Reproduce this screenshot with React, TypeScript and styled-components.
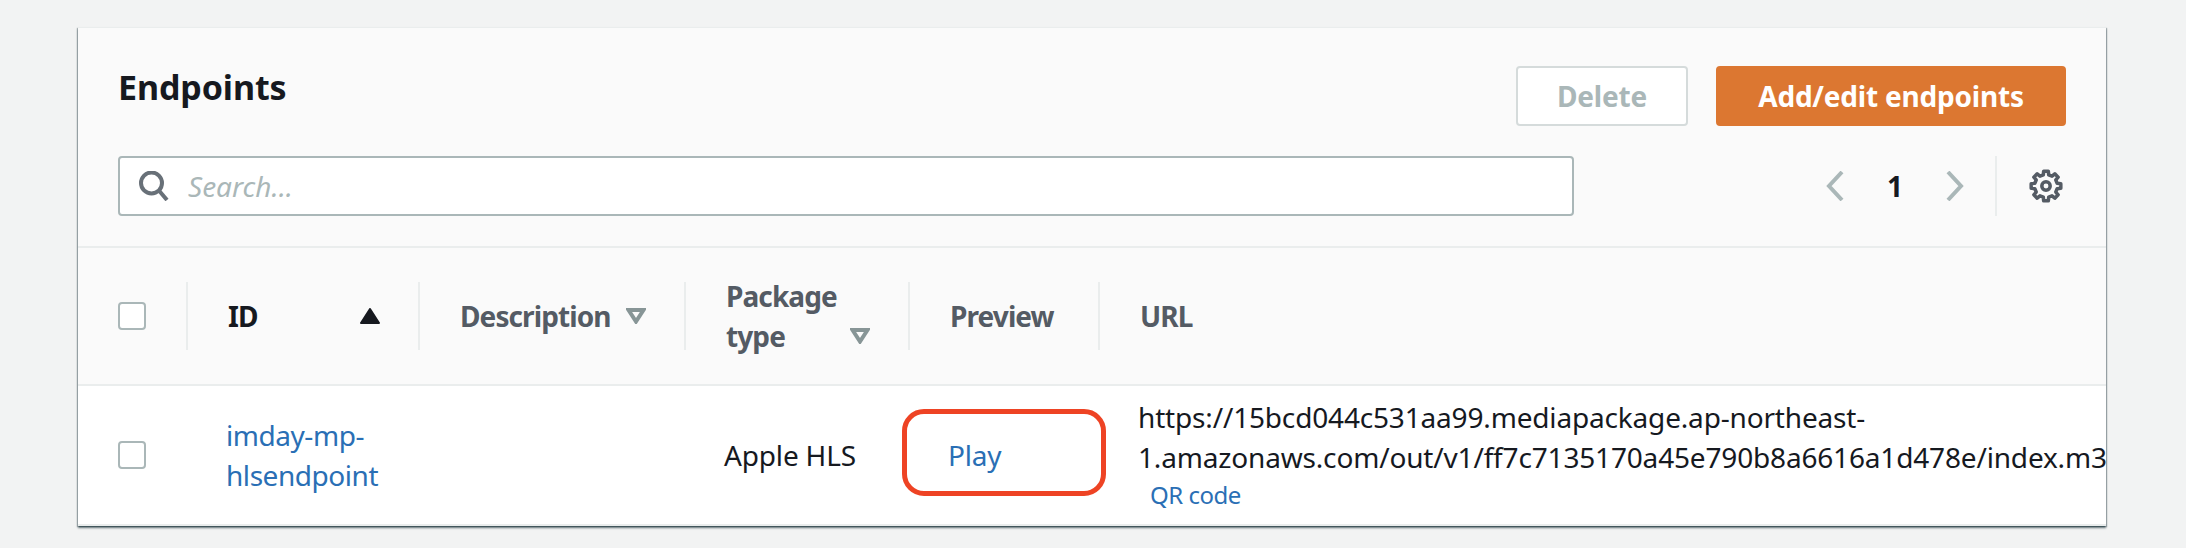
import React from "react";
import styled, { createGlobalStyle } from "styled-components";

const Global = createGlobalStyle`
  html, body { margin: 0; padding: 0; background: #f2f3f3; overflow: hidden; }
  body { font-family: "Noto Sans", "Open Sans", Arial, sans-serif; color: #16191f; }
  * { box-sizing: border-box; }
`;

const Page = styled.div`
  width: 2186px;
  height: 548px;
  padding: 27px 80px 22px 78px;
  background: #f2f3f3;
`;

const Card = styled.section`
  width: 2028px;
  height: 499px;
  background: #fff;
  border-top: 1px solid #eaeded;
  box-shadow: 0 2px 2px 0 rgba(0, 28, 36, 0.55), 1px 1px 1px 0 rgba(0, 28, 36, 0.25), -1px 1px 1px 0 rgba(0, 28, 36, 0.25);
  overflow: hidden;
  display: flex;
  flex-direction: column;
`;

const CardHeader = styled.header`
  height: 220px;
  background: #fafafa;
  border-bottom: 2px solid #eaeded;
  padding: 38px 40px 0 40px;
  flex: none;
`;

const TitleRow = styled.div`
  display: flex;
  align-items: flex-start;
  justify-content: space-between;
  height: 90px;
`;

const Title = styled.h2`
  margin: 0;
  font-size: 34px;
  line-height: 42px;
  font-weight: 700;
  letter-spacing: -0.1px;
  color: #16191f;
`;

const Actions = styled.div`
  display: flex;
  gap: 28px;
`;

const Button = styled.button<{ $primary?: boolean }>`
  height: 60px;
  width: ${(p) => (p.$primary ? "350px" : "172px")};
  border-radius: 4px;
  border: 2px solid ${(p) => (p.$primary ? "#dc7731" : "#d5dbdb")};
  background: ${(p) => (p.$primary ? "#dc7731" : "#fff")};
  color: ${(p) => (p.$primary ? "#fff" : "#aab7b8")};
  font: 700 28px/1 "Noto Sans", sans-serif;
  letter-spacing: -0.2px;
  padding: 0;
`;

const ToolRow = styled.div`
  display: flex;
  align-items: center;
  height: 60px;
`;

const SearchBox = styled.div`
  width: 1456px;
  height: 60px;
  background: #fff;
  border: 2px solid #aab7b8;
  border-radius: 4px;
  display: flex;
  align-items: center;
  padding-left: 19px;
  gap: 18px;
`;

const Placeholder = styled.span`
  font-size: 28px;
  font-style: italic;
  color: #aab7b8;
`;

const Pager = styled.div`
  display: flex;
  align-items: center;
  margin-left: 252px;
  height: 60px;
`;

const PageNum = styled.span`
  width: 102px;
  text-align: center;
  font-size: 28px;
  font-weight: 700;
  color: #16191f;
`;

const Separator = styled.div`
  width: 2px;
  height: 60px;
  background: #eaeded;
  margin-left: 31px;
  margin-right: 32px;
`;

const columns = "108px 232px 266px 224px 190px 1fr";

const HeadRow = styled.div`
  display: grid;
  grid-template-columns: ${columns};
  height: 138px;
  background: #fafafa;
  border-bottom: 2px solid #eaeded;
  flex: none;
`;

const HeadCell = styled.div<{ $first?: boolean }>`
  position: relative;
  display: flex;
  align-items: center;
  justify-content: space-between;
  height: 68px;
  margin-top: 34px;
  padding-left: 40px;
  border-left: ${(p) => (p.$first ? "none" : "2px solid #eaeded")};
  font-size: 28px;
  line-height: 40px;
  font-weight: 700;
  letter-spacing: -0.9px;
  color: #545b64;
`;

const HeadLabel = styled.span<{ $active?: boolean }>`
  color: ${(p) => (p.$active ? "#16191f" : "#545b64")};
`;

const SortSlot = styled.span<{ $bottom?: boolean }>`
  display: flex;
  flex: none;
  width: 20px;
  margin-right: 38px;
  margin-bottom: ${(p) => (p.$bottom ? "12px" : "0")};
`;

const WrapHead = styled.div`
  display: flex;
  align-items: flex-end;
  justify-content: space-between;
  width: 100%;
`;

const BodyRow = styled.div`
  display: grid;
  grid-template-columns: ${columns};
  flex: 1;
  background: #fff;
  align-items: center;
  border-bottom: 2px solid #eaeded;
`;

const BodyCell = styled.div<{ $pad?: number }>`
  position: relative;
  padding-left: ${(p) => p.$pad ?? 0}px;
  font-size: 28px;
  line-height: 40px;
  letter-spacing: -0.17px;
  color: #16191f;
  min-width: 0;
`;

const Check = styled.span`
  display: block;
  width: 28px;
  height: 28px;
  background: #fff;
  border: 2px solid #aab7b8;
  border-radius: 4px;
`;

const Link = styled.a`
  color: #2a6fb5;
  text-decoration: none;
  display: block;
`;

const EndpointLink = styled(Link)`
  letter-spacing: -0.45px;
`;

const UrlLine = styled.span`
  display: block;
  white-space: nowrap;
`;

const QrLink = styled.a`
  display: block;
  margin-left: 12px;
  font-size: 24px;
  line-height: 36px;
  letter-spacing: -0.5px;
  color: #2a6fb5;
`;

const Highlight = styled.span`
  position: absolute;
  left: -6px;
  top: -26px;
  width: 204px;
  height: 87px;
  border: 5px solid #ee4324;
  border-radius: 22px;
`;

const SortUp = () => (
  <svg width="20" height="16" viewBox="0 0 20 16"><path d="M10 1 19 15H1Z" fill="#16191f" stroke="#16191f" strokeWidth="2" strokeLinejoin="round" /></svg>
);
const SortDown = () => (
  <svg width="20" height="16" viewBox="0 0 20 16"><path d="M2.500 2h15L10 13.500Z" fill="none" stroke="#879596" strokeWidth="4" /></svg>
);

const SearchIcon = () => (
  <svg width="31" height="30" viewBox="0 0 31 30" fill="none" stroke="#687078" strokeWidth="4">
    <circle cx="12.500" cy="12" r="10.500" />
    <path d="M19.500 19 28 29" />
  </svg>
);

const Chevron = ({ right }: { right?: boolean }) => (
  <svg width="18" height="30" viewBox="0 0 18 30" fill="none" stroke="#aab7b8" strokeWidth="4">
    <path d={right ? "M2 1l13 14L2 29" : "M16 1 3 15l13 14"} />
  </svg>
);

const gearPath = (() => {
  const pts: string[] = [];
  const teeth = 8;
  const at = (r: number, a: number) => `${(17 + r * Math.cos(a)).toFixed(2)} ${(17 + r * Math.sin(a)).toFixed(2)}`;
  for (let i = 0; i < teeth; i++) {
    const c = (i / teeth) * Math.PI * 2 - Math.PI / 2;
    const step = (Math.PI * 2) / teeth;
    pts.push(at(11.5, c - step * 0.3), at(15, c - step * 0.2), at(15, c + step * 0.2), at(11.5, c + step * 0.3));
  }
  return `M${pts.join("L")}Z`;
})();

const Gear = () => (
  <svg width="34" height="34" viewBox="0 0 34 34" fill="none" stroke="#545b64" strokeWidth="3.500" strokeLinejoin="round">
    <path d={gearPath} />
    <circle cx="17" cy="17" r="4.200" />
  </svg>
);

export default function App() {
  return (
    <Page>
      <Global />
      <Card>
        <CardHeader>
          <TitleRow>
            <Title>Endpoints</Title>
            <Actions>
              <Button>Delete</Button>
              <Button $primary>Add/edit endpoints</Button>
            </Actions>
          </TitleRow>
          <ToolRow>
            <SearchBox>
              <SearchIcon />
              <Placeholder>Search...</Placeholder>
            </SearchBox>
            <Pager>
              <Chevron />
              <PageNum>1</PageNum>
              <Chevron right />
              <Separator />
              <Gear />
            </Pager>
          </ToolRow>
        </CardHeader>
        <HeadRow>
          <HeadCell $first><Check /></HeadCell>
          <HeadCell><HeadLabel $active>ID</HeadLabel><SortSlot><SortUp /></SortSlot></HeadCell>
          <HeadCell><HeadLabel>Description</HeadLabel><SortSlot><SortDown /></SortSlot></HeadCell>
          <HeadCell>
            <WrapHead>
              <HeadLabel>Package<br />type</HeadLabel>
              <SortSlot $bottom><SortDown /></SortSlot>
            </WrapHead>
          </HeadCell>
          <HeadCell><HeadLabel>Preview</HeadLabel></HeadCell>
          <HeadCell><HeadLabel>URL</HeadLabel></HeadCell>
        </HeadRow>
        <BodyRow>
          <BodyCell $pad={40}><Check /></BodyCell>
          <BodyCell $pad={40}><EndpointLink>imday-mp-<br />hlsendpoint</EndpointLink></BodyCell>
          <BodyCell />
          <BodyCell $pad={40}>Apple HLS</BodyCell>
          <BodyCell $pad={40}><Link>Play</Link><Highlight /></BodyCell>
          <BodyCell $pad={40}>
            <UrlLine>https://15bcd044c531aa99.mediapackage.ap-northeast-</UrlLine>
            <UrlLine>1.amazonaws.com/out/v1/ff7c7135170a45e790b8a6616a1d478e/index.m3u8</UrlLine>
            <QrLink>QR code</QrLink>
          </BodyCell>
        </BodyRow>
      </Card>
    </Page>
  );
}
